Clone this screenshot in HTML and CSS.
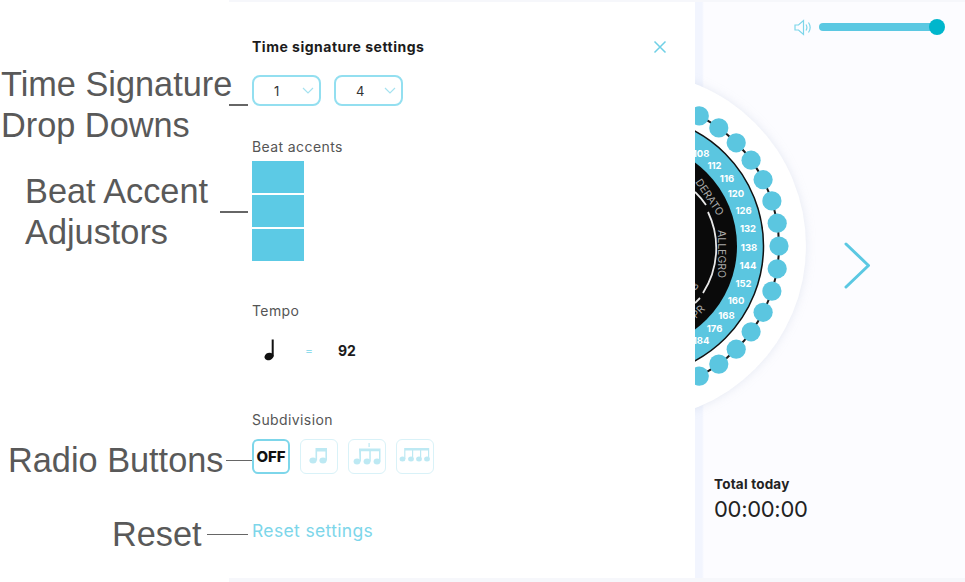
FILE: index.html
```html
<!DOCTYPE html>
<html lang="en">
<head>
    <meta charset="UTF-8">
    <meta name="viewport" content="width=device-width, initial-scale=1.0">
    <title>Metronome settings</title>
    <link rel="stylesheet" href="styles.css">
</head>
<body>
    <div class="app">
        <div class="notes">
            <div class="note note-time"><span>Time Signature<br>Drop Downs</span><i class="rule"></i></div>
            <div class="note note-beat"><span>Beat Accent<br>Adjustors</span><i class="rule"></i></div>
            <div class="note note-radio"><span>Radio Buttons</span><i class="rule"></i></div>
            <div class="note note-reset"><span>Reset</span><i class="rule"></i></div>
        </div>

        <div class="panel">
            <div class="panel-head">
                <h2 class="panel-title">Time signature settings</h2>
                <svg class="close" width="14" height="14" viewBox="0 0 14 14"><path d="M1.5 1.5l11 11M12.5 1.5l-11 11"/></svg>
            </div>

            <div class="selects">
                <div class="select"><span>1</span><svg width="12" height="7" viewBox="0 0 12 7"><path d="M1 1l5 5 5-5"/></svg></div>
                <div class="select"><span>4</span><svg width="12" height="7" viewBox="0 0 12 7"><path d="M1 1l5 5 5-5"/></svg></div>
            </div>

            <div class="label label-beat">Beat accents</div>
            <div class="accents">
                <div class="accent"></div>
                <div class="accent"></div>
                <div class="accent"></div>
            </div>

            <div class="label label-tempo">Tempo</div>
            <div class="tempo">
                <svg class="quarter" width="14" height="22" viewBox="0 0 14 22">
                    <ellipse cx="6" cy="17.5" rx="4.6" ry="3.6" transform="rotate(-20 6 17.5)"/>
                    <rect x="8.7" y="0.5" width="2" height="17"/>
                </svg>
                <span class="equals">=</span>
                <span class="bpm">92</span>
            </div>

            <div class="label label-sub">Subdivision</div>
            <div class="subdivs">
                <div class="subdiv subdiv-on">OFF</div>
                <div class="subdiv">
                    <svg width="36" height="33" viewBox="1 1 36 33">
                        <ellipse cx="13" cy="21.5" rx="3.6" ry="3"/><ellipse cx="23" cy="21.5" rx="3.6" ry="3"/>
                        <path d="M15.5 9h11.5v12.5h-1.6V12.5h-8.3v9h-1.6z"/>
                    </svg>
                </div>
                <div class="subdiv">
                    <svg width="36" height="33" viewBox="1 1 36 33">
                        <ellipse cx="9" cy="22.5" rx="3.4" ry="3"/><ellipse cx="19" cy="22.5" rx="3.4" ry="3"/><ellipse cx="29" cy="22.5" rx="3.4" ry="3"/>
                        <path d="M11 9.5h21.5v13h-1.5v-10.3h-8.2v10.3h-1.5v-10.3h-8.3v10.3h-1.5z"/>
                        <rect x="20.5" y="4" width="1.2" height="4"/>
                    </svg>
                </div>
                <div class="subdiv">
                    <svg width="36" height="33" viewBox="1 1 36 33">
                        <ellipse cx="6.5" cy="20" rx="2.9" ry="2.5"/><ellipse cx="15" cy="20" rx="2.9" ry="2.5"/><ellipse cx="23" cy="20" rx="2.9" ry="2.5"/><ellipse cx="31" cy="20" rx="2.9" ry="2.5"/>
                        <path d="M8.2 9h25v11h-1.2v-8.4h-6.8v8.4H24v-8.4h-6.8v8.4H16v-8.4H9.4v8.4H8.2z"/>
                    </svg>
                </div>
            </div>

            <a class="reset">Reset settings</a>
        </div>

        <div class="main">
            <svg class="wheel" width="360" height="360" viewBox="460 66 360 360">
                <circle class="disc" cx="632" cy="246" r="174"/>
                <circle class="bead-line" cx="633" cy="246" r="146"/>
                <g class="beads">
                    <circle cx="779" cy="246" r="9.6"/>
                    <circle cx="777.2" cy="223.2" r="9.6"/><circle cx="777.2" cy="268.8" r="9.6"/>
                    <circle cx="771.9" cy="200.9" r="9.6"/><circle cx="771.9" cy="291.1" r="9.6"/>
                    <circle cx="763.1" cy="179.7" r="9.6"/><circle cx="763.1" cy="312.3" r="9.6"/>
                    <circle cx="751.1" cy="160.2" r="9.6"/><circle cx="751.1" cy="331.8" r="9.6"/>
                    <circle cx="736.2" cy="142.8" r="9.6"/><circle cx="736.2" cy="349.2" r="9.6"/>
                    <circle cx="718.8" cy="127.9" r="9.6"/><circle cx="718.8" cy="364.1" r="9.6"/>
                    <circle cx="699.3" cy="115.9" r="9.6"/><circle cx="699.3" cy="376.1" r="9.6"/>
                </g>
                <circle class="band" cx="633" cy="246" r="130.5"/>
                <circle class="core" cx="633" cy="246" r="104"/>
                <path class="arc" d="M695 192A83 83 0 0 1 706 205"/>
                <path class="arc" d="M708 212A83 83 0 0 1 703 293"/>
                <path class="arc" d="M700 298l-5 5"/>
                <g class="speeds">
                    <text x="701" y="156.5">108</text>
                    <text x="714.5" y="168.5">112</text>
                    <text x="727" y="181.5">116</text>
                    <text x="736" y="196.5">120</text>
                    <text x="743.5" y="213.5">126</text>
                    <text x="748" y="232">132</text>
                    <text x="749" y="250.5">138</text>
                    <text x="748" y="268.5">144</text>
                    <text x="743.5" y="286.5">152</text>
                    <text x="736" y="303.5">160</text>
                    <text x="726.5" y="318.5">168</text>
                    <text x="714.5" y="332">176</text>
                    <text x="701" y="344">184</text>
                </g>
                <g class="tempo-names">
                    <text transform="translate(695 182) rotate(56)">DERATO</text>
                    <text transform="translate(718 230) rotate(90)">ALLEGRO</text>
                    <text transform="translate(696 319) rotate(-45)">PR</text>
                    <text transform="translate(695 291) rotate(-50)">B</text>
                </g>
            </svg>

            <div class="volume">
                <svg class="speaker" width="18" height="17" viewBox="0 0 18 17">
                    <path d="M1 6h3.5L9.5 1.5v14L4.500 11H1z"/>
                    <path d="M12 5.500c1.200 2 1.200 4 0 6M14.500 3.500c2 3 2 7 0 10"/>
                </svg>
                <div class="track"><div class="thumb"></div></div>
            </div>

            <svg class="next" width="27" height="47" viewBox="0 0 27 47"><path d="M2 2l22.500 21.500L2 45"/></svg>

            <div class="total-label">Total today</div>
            <div class="total-time">00:00:00</div>
        </div>
    </div>
</body>
</html>
```

FILE: styles.css
```css
* {
    margin: 0;
    padding: 0;
    box-sizing: border-box;
}

body {
    width: 965px;
    height: 582px;
    overflow: hidden;
    font-family: Inter, "Open Sans", sans-serif;
    background-color: #f6f7fb;
}

.app {
    display: flex;
    height: 582px;
}

/* annotations on the left */
.notes {
    width: 229px;
    flex-shrink: 0;
    background-color: #fff;
    position: relative;
    z-index: 2;
    font-family: "Liberation Sans", Arial, sans-serif;
    font-size: 34.300px;
    line-height: 41px;
    color: #595959;
}

.note {
    display: flex;
    align-items: center;
    width: 248px;
}

.note span {
    white-space: nowrap;
}

.rule {
    flex: 1;
    height: 1.500px;
    background-color: #666;
}

.note-time {
    margin-top: 64px;
    padding-left: 1px;
}

.note-time .rule {
    margin-left: -3px;
}

.note-beat {
    margin-top: 25px;
    padding-left: 25px;
}

.note-beat .rule {
    margin-left: 12px;
}

.note-radio {
    margin-top: 187px;
    padding-left: 8px;
    width: 252px;
}

.note-radio .rule {
    margin-left: 3px;
}

.note-reset {
    margin-top: 33px;
    padding-left: 112px;
}

.note-reset .rule {
    margin-left: 5px;
}

/* settings panel */
.panel {
    width: 466px;
    flex-shrink: 0;
    margin: 2px 0 4px;
    padding: 37px 28px 0 23px;
    background-color: #fff;
    position: relative;
    z-index: 1;
}

.panel-head {
    display: flex;
    justify-content: space-between;
    align-items: center;
    height: 16px;
}

.panel-title {
    font-size: 14px;
    font-weight: 700;
    line-height: 16px;
    letter-spacing: 0.500px;
    color: #1c1c1c;
}

.close path {
    fill: none;
    stroke: #6fd0e6;
    stroke-width: 1.500;
}

.selects {
    display: flex;
    gap: 13px;
    margin-top: 20px;
}

.select {
    display: flex;
    align-items: center;
    width: 69px;
    height: 31px;
    padding: 0 5px 0 20px;
    border: 2px solid #93dff0;
    border-radius: 8px;
    font-size: 13px;
    color: #333;
}

.select span {
    flex: 1;
}

.select path {
    fill: none;
    stroke: #a5e2f0;
    stroke-width: 1.200;
}

.label {
    font-size: 14px;
    line-height: 16px;
    letter-spacing: 0.400px;
    color: #555;
}

.label-beat {
    margin-top: 33px;
}

.accents {
    display: flex;
    flex-direction: column;
    gap: 2px;
    margin-top: 6px;
}

.accent {
    width: 52px;
    height: 32px;
    background-color: #5ccae5;
}

.label-tempo {
    margin-top: 42px;
}

.tempo {
    display: flex;
    align-items: center;
    height: 22px;
    margin-top: 20px;
    padding-left: 11px;
}

.quarter {
    fill: #111;
}

.equals {
    margin-left: 28px;
    width: 33px;
    font-size: 12px;
    color: #8fdcec;
}

.bpm {
    font-size: 14px;
    font-weight: 700;
    color: #1c1c1c;
}

.label-sub {
    margin-top: 51px;
}

.subdivs {
    display: flex;
    gap: 10px;
    margin-top: 11px;
}

.subdiv {
    display: flex;
    align-items: center;
    justify-content: center;
    width: 38px;
    height: 35px;
    border: 1px solid #d9f2f8;
    border-radius: 6px;
    fill: #bde9f3;
}

.subdiv-on {
    border: 2px solid #7dd6ea;
    font-size: 15px;
    font-weight: 800;
    color: #111;
}

.reset {
    display: block;
    margin-top: 47px;
    font-size: 17.500px;
    line-height: 20px;
    letter-spacing: 0.350px;
    color: #7dd6ea;
}

/* metronome side */
.main {
    position: relative;
    flex: 1;
    margin: 2px 0 4px;
    overflow: hidden;
    display: flex;
    flex-direction: column;
    background: linear-gradient(to right, #f2f5fe 0, #f2f5fe 7px, #fcfcff 9px);
}

.wheel {
    position: absolute;
    left: -235px;
    top: 64px;
}

.disc {
    fill: #fff;
    filter: drop-shadow(0 0 5px rgba(160, 175, 205, 0.25));
}

.bead-line {
    fill: none;
    stroke: #1a1a1a;
    stroke-width: 2;
}

.beads {
    fill: #5bc6e0;
}

.band {
    fill: #5bc6e0;
    stroke: #111;
    stroke-width: 1.500;
}

.core {
    fill: #0a0a0a;
}

.arc {
    fill: none;
    stroke: #e8e8e8;
    stroke-width: 1.800;
}

.speeds text {
    font-size: 9.500px;
    font-weight: 700;
    fill: #fff;
    text-anchor: middle;
}

.tempo-names text {
    font-size: 10.500px;
    fill: #a9a9a9;
}

.volume {
    position: relative;
    display: flex;
    align-items: center;
    gap: 7px;
    align-self: flex-end;
    margin: 17px 27px 0 0;
    height: 16px;
}

.speaker path {
    fill: none;
    stroke: #7dd6ea;
    stroke-width: 1.200;
}

.track {
    display: flex;
    align-items: center;
    justify-content: flex-end;
    width: 119px;
    height: 8px;
    border-radius: 4px;
    background-color: #5bc8e2;
}

.thumb {
    flex-shrink: 0;
    width: 16px;
    height: 16px;
    margin-right: -7px;
    border-radius: 50%;
    background-color: #00b6cc;
}

.next {
    position: relative;
    margin: 207px 0 0 149px;
}

.next path {
    fill: none;
    stroke: #5bc8e2;
    stroke-width: 3;
    stroke-linecap: round;
    stroke-linejoin: round;
}

.total-label {
    position: relative;
    margin: 187px 0 0 19px;
    font-size: 13.500px;
    font-weight: 700;
    line-height: 16px;
    letter-spacing: 0.200px;
    color: #222;
}

.total-time {
    position: relative;
    margin: 3px 0 0 19px;
    font-size: 22px;
    line-height: 28px;
    letter-spacing: -0.300px;
    color: #222;
}
```
